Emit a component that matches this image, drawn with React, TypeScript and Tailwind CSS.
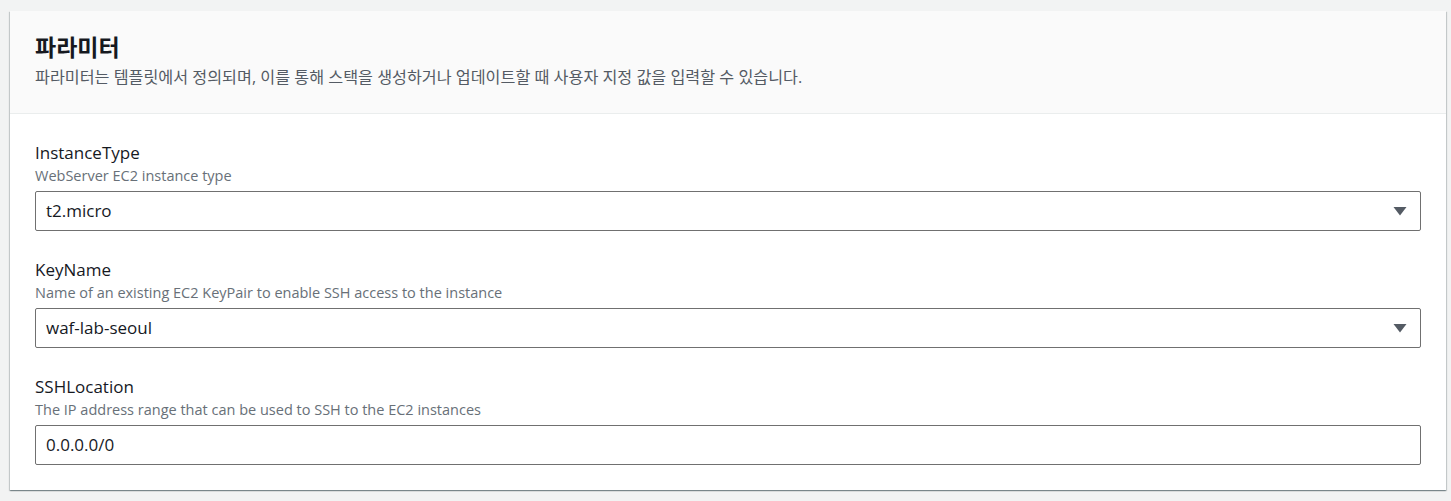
import React from "react";

const fields = [
  { name: "InstanceType", desc: "WebServer EC2 instance type", value: "t2.micro", select: true },
  { name: "KeyName", desc: "Name of an existing EC2 KeyPair to enable SSH access to the instance", value: "waf-lab-seoul", select: true },
  { name: "SSHLocation", desc: "The IP address range that can be used to SSH to the EC2 instances", value: "0.0.0.0/0", select: false },
];

const Field = ({ name, desc, value, select }: { name: string; desc: string; value: string; select: boolean }) => {
  return (
    <div className="flex flex-col">
      <label className="text-[17px] leading-[22px] text-[#16191f]">{name}</label>
      <span className="text-[14.5px] leading-[20px] text-[#687078] mt-[2px]">{desc}</span>
      <div className="mt-[5px] h-[40px] border border-[#707070] rounded-[2px] bg-white flex items-center justify-between pl-[10px] pr-[13px]">
        <span className="text-[17px] text-[#16191f]">{value}</span>
        {select && (
          <svg width="14" height="10" viewBox="0 0 14 10">
            <path d="M0.5 1h13L7 9.5z" fill="#545b64" />
          </svg>
        )}
      </div>
    </div>
  );
};

export default function App() {
  return (
    <div
      className="w-[1451px] h-[501px] bg-[#f2f3f3] pt-[11px] pl-[10px] pr-[5px]"
      style={{ fontFamily: '"Open Sans", "Noto Sans CJK KR", sans-serif' }}
    >
      <div className="bg-white shadow-[0_1px_1px_0_rgba(0,28,36,0.3),1px_1px_1px_0_rgba(0,28,36,0.15),-1px_1px_1px_0_rgba(0,28,36,0.15)]">
        <div className="bg-[#fafafa] border-b border-[#eaeded] px-[25px] pt-[21px] h-[103px]">
          <h2 className="text-[23px] leading-[30px] font-bold text-[#16191f]">파라미터</h2>
          <p className="text-[16.2px] leading-[22px] text-[#545b64] mt-[4px]">
            파라미터는 템플릿에서 정의되며, 이를 통해 스택을 생성하거나 업데이트할 때 사용자 지정 값을 입력할 수 있습니다.
          </p>
        </div>
        <div className="px-[25px] pt-[28px] pb-[25px] flex flex-col gap-[28px]">
          {fields.map((f) => (
            <Field key={f.name} {...f} />
          ))}
        </div>
      </div>
    </div>
  );
}
